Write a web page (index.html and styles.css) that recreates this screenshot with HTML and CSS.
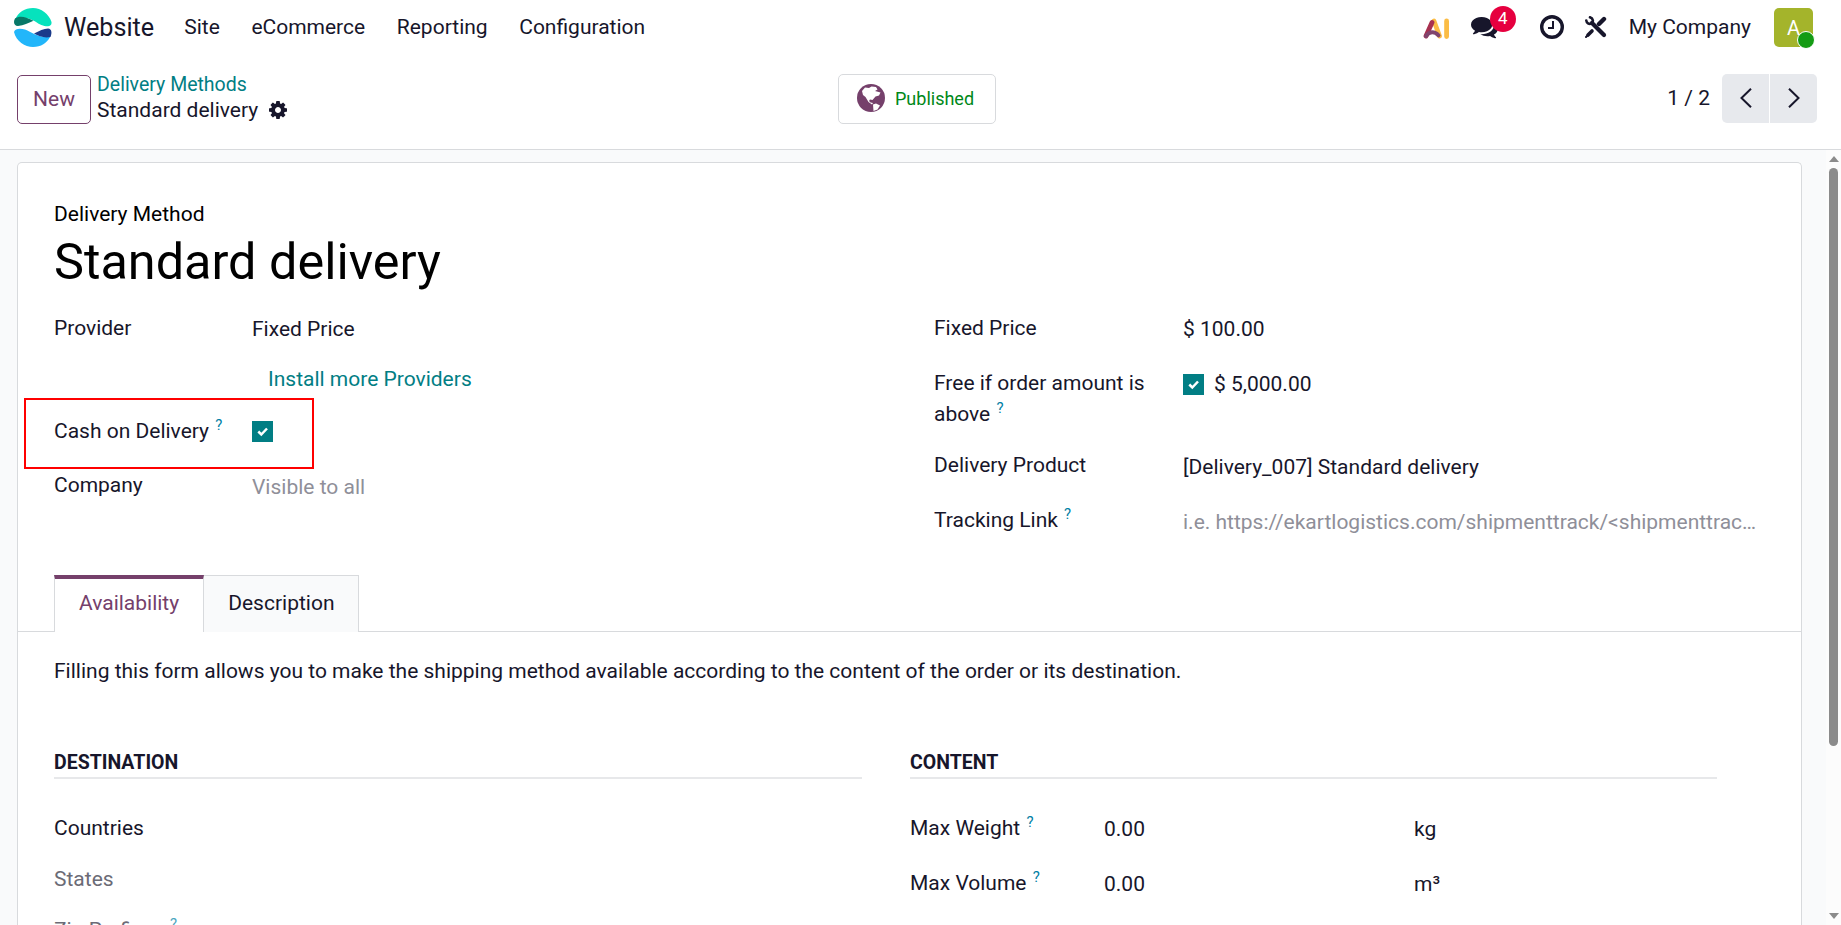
FILE: index.html
```
<!DOCTYPE html>
<html lang="en">
<head>
  <meta charset="UTF-8">
  <title>Standard delivery</title>
  <link rel="stylesheet" href="styles.css">
</head>
<body>
  <header class="navbar">
    <svg class="logo" viewBox="0 0 38 39">
      <path d="M1 12C4 4 11 0 19 0s16 6 18.500 14c.5 4-3 5-7 4-4.500-1-7.500-3.500-11-5.500C14 10 8 8 1 12z" fill="#06e2bd"/>
      <path d="M1 10.500c5-3.500 12-1 18.500 2.200C14 15 10 17.500 4 18c-4 0-5-4-3-7.500z" fill="#087868"/>
      <path d="M0 24c1-4 7-3.500 11-2.500 7 2.500 13 8.500 25 7.500-3 6-9 10-17 10S2 33 0 24z" fill="#22b6fa"/>
      <path d="M20 25.500c5-2.500 10-5 14-5 4 .5 4 4.500 2.500 8.500C30 30.500 25 28 20 25.500z" fill="#1a3a8a"/>
    </svg>
    <span class="app-name">Website</span>
    <nav class="menu">
      <a>Site</a>
      <a>eCommerce</a>
      <a>Reporting</a>
      <a>Configuration</a>
    </nav>
    <div class="systray">
      <svg class="ai" viewBox="0 0 26 21" fill="none" stroke-width="4.800" stroke-linecap="round">
        <path d="M11 3l5.500 15M23.600 3v15.500" stroke="#fbbc45"/>
        <path d="M9 4.500L3 18" stroke="#a8304f"/>
        <path d="M3 18.200c3.500-5 8.500-5 12.500-.8" stroke="#80446d" stroke-width="4"/>
      </svg>
      <div class="messages">
        <svg viewBox="0 128 1792 1536"><path fill="#17162b" d="M1408 768q0 139-94 257t-256.500 186.500-353.500 68.500q-86 0-176-16-124 88-278 128-36 9-86 16h-3q-11 0-20.500-8t-11.500-21q-1-3-1-6.500t.5-6.500 2-6l2.500-5 3.500-5.500 4-5 4.500-5 4-4.500q5-6 23-25t26-29.500 22.500-29 25-38.500 20.500-44q-124-72-195-177t-71-224q0-139 94-257t256.500-186.500 353.500-68.500 353.500 68.500 256.500 186.500 94 257zm384 256q0 120-71 224.500t-195 176.500q10 24 20.500 44t25 38.500 22.500 29 26 29.500 23 25q1 1 4 4.500t4.500 5 4 5 3.500 5.500l2.500 5 2 6 .5 6.500-1 6.500q-3 14-13 22t-22 7q-50-7-86-16-154-40-278-128-90 16-176 16-271 0-472-132 58 4 88 4 161 0 309-45t264-129q125-92 192-212t67-254q0-77-23-152 129 71 204 178t75 230z"/></svg>
        <span class="badge">4</span>
      </div>
      <svg class="clock" viewBox="0 0 24 24" fill="none" stroke="#17162b">
        <circle cx="12" cy="12" r="10.300" stroke-width="3.400"/>
        <path d="M13 6v7H8" stroke-width="2"/>
      </svg>
      <svg class="tools" viewBox="0 0 22 22" fill="none" stroke="#17162b" stroke-linecap="round">
        <path d="M7 7l12 12" stroke-width="4.200"/>
        <path d="M1.300 4.500C1.500 7 4 8.500 6.500 7.500 8.500 6 8.500 2.500 5 1.300" stroke-width="2.600"/>
        <path d="M19 3l-5 5" stroke-width="4.400"/>
        <path d="M7 15l-4 4" stroke-width="3.600"/>
        <path d="M3 19l-2 2" stroke-width="2"/>
      </svg>
      <span class="company">My Company</span>
      <div class="avatar">A<span class="status"></span></div>
    </div>
  </header>

  <div class="control-panel">
    <button class="btn-new">New</button>
    <div class="breadcrumb">
      <a class="link">Delivery Methods</a>
      <div class="current">Standard delivery
        <svg class="gear" viewBox="128 128 1536 1536"><path fill="#17162b" d="M1152 896q0-106-75-181t-181-75-181 75-75 181 75 181 181 75 181-75 75-181zm512-109v222q0 12-8 23t-20 13l-185 28q-19 54-39 91 35 50 107 138 10 12 10 25t-9 23q-27 37-99 108t-94 71q-12 0-26-9l-138-108q-44 23-91 38-16 136-29 186-7 28-36 28h-222q-14 0-24.500-8.500t-11.500-21.500l-28-184q-49-16-90-37l-141 107q-10 9-25 9-14 0-25-11-126-114-165-168-7-10-7-23 0-12 8-23 15-21 51-66.500t54-70.500q-27-50-41-99l-183-27q-13-2-21-12.500t-8-23.500v-222q0-12 8-23t19-13l186-28q14-46 39-92-40-57-107-138-10-12-10-24 0-10 9-23 26-36 98.500-107.500t94.500-71.500q13 0 26 10l138 107q44-23 91-38 16-136 29-186 7-28 36-28h222q14 0 24.500 8.500t11.500 21.500l28 184q49 16 90 37l142-107q9-9 24-9 13 0 25 10 129 119 165 170 7 8 7 22 0 12-8 23-15 21-51 66.500t-54 70.500q26 50 41 98l183 28q13 2 21 12.500t8 23.500z"/></svg>
      </div>
    </div>
    <button class="btn-published">
      <svg class="globe" viewBox="0 0 28 28">
        <circle cx="14" cy="14" r="14" fill="#75406b"/>
        <path d="M5 7l3-3.500 4 .5 2.500-1.500L19 3l1.500 2.500L18 7l5.500 1.500-1.500 3-3.500 1-3 3.500-2.500-.5-1 1.500 1.500 1.500 2.500.5-1 1.500-3.500-2.500-3-5L6 11zM16 20.500l3-1 4 2-2.500 4-4 1.500z" fill="#fff"/>
      </svg>
      Published
    </button>
    <div class="pager">
      <span class="count">1 / 2</span>
      <button><svg viewBox="0 0 12 20"><path d="M11 .8L1.500 10l9.500 9.200"/></svg></button>
      <button><svg viewBox="0 0 12 20"><path d="M1 .8l9.500 9.200L1 19.200"/></svg></button>
    </div>
  </div>

  <main class="content">
    <div class="sheet">
      <div class="title-label">Delivery Method</div>
      <h1>Standard delivery</h1>

      <div class="groups">
        <div class="group group-left">
          <div class="label">Provider</div>
          <div class="value">Fixed Price</div>
          <div class="label"></div>
          <div class="value install"><a class="link">Install more Providers</a></div>
          <div class="label">Cash on Delivery <sup>?</sup></div>
          <div class="value cod"><span class="check"><svg viewBox="0 0 21 21"><path d="M6.300 10.500l3 3 5.700-6"/></svg></span></div>
          <div class="label">Company</div>
          <div class="value muted">Visible to all</div>
        </div>
        <div class="group group-right">
          <div class="label">Fixed Price</div>
          <div class="value">$ 100.00</div>
          <div class="label">Free if order amount is above <sup>?</sup></div>
          <div class="value"><span class="check"><svg viewBox="0 0 21 21"><path d="M6.300 10.500l3 3 5.700-6"/></svg></span>$ 5,000.00</div>
          <div class="label">Delivery Product</div>
          <div class="value product">[Delivery_007] Standard delivery</div>
          <div class="label">Tracking Link <sup>?</sup></div>
          <div class="value muted">i.e. https://ekartlogistics.com/shipmenttrack/&lt;shipmenttrac…</div>
        </div>
      </div>

      <div class="tabs">
        <div class="tab active">Availability</div>
        <div class="tab">Description</div>
      </div>

      <p class="help">Filling this form allows you to make the shipping method available according to the content of the order or its destination.</p>

      <div class="sections">
        <section>
          <h2>Destination</h2>
          <div class="row">Countries</div>
          <div class="row dim">States</div>
          <div class="row dim">Zip Prefixes <sup>?</sup></div>
        </section>
        <section>
          <h2>Content</h2>
          <div class="measure">
            <div class="label">Max Weight <sup>?</sup></div>
            <div class="value">0.00</div>
            <div class="value">kg</div>
          </div>
          <div class="measure">
            <div class="label">Max Volume <sup>?</sup></div>
            <div class="value">0.00</div>
            <div class="value">m³</div>
          </div>
        </section>
      </div>
      <div class="highlight"></div>
    </div>
    <div class="scrollbar">
      <svg class="arrow" viewBox="0 0 10 6"><path d="M5 0l5 6H0z"/></svg>
      <div class="thumb"></div>
      <svg class="arrow" viewBox="0 0 10 6"><path d="M0 0h10L5 6z"/></svg>
    </div>
  </main>
</body>
</html>
```
FILE: styles.css
```
* {
  box-sizing: border-box;
}
body {
  margin: 0;
  height: 925px;
  overflow: hidden;
  display: flex;
  flex-direction: column;
  font-family: Roboto, sans-serif;
  font-size: 21px;
  line-height: 30px;
  color: #17162b;
  background-color: white;
}
button {
  font: inherit;
  padding: 0;
}
svg {
  display: block;
  flex: none;
}
.link {
  color: #017e84;
}

/* top bar */
.navbar {
  height: 54px;
  flex: none;
  display: flex;
  align-items: center;
  padding: 0 28px 0 14px;
}
.logo {
  width: 38px;
  height: 39px;
}
.app-name {
  font-size: 25.2px;
  margin: 1px 0 0 12px;
}
.menu {
  display: flex;
  gap: 31.6px;
  margin-left: 30px;
}
.systray {
  display: flex;
  align-items: center;
  margin-left: auto;
}
.ai {
  width: 26px;
  height: 21px;
  margin-top: 2px;
}
.messages {
  position: relative;
  width: 27px;
  margin-left: 22px;
}
.badge {
  position: absolute;
  left: 19px;
  top: -9px;
  width: 26px;
  height: 26px;
  border-radius: 13px;
  background-color: #e6003f;
  color: white;
  font-size: 17px;
  line-height: 25px;
  text-align: center;
}
.clock {
  width: 24px;
  height: 24px;
  margin-left: 42px;
}
.tools {
  width: 22px;
  height: 22px;
  margin-left: 21px;
}
.company {
  margin-left: 22px;
}
.avatar {
  position: relative;
  width: 39px;
  height: 39px;
  margin-left: 23px;
  border-radius: 5px;
  background-color: #a4b42b;
  color: white;
  font-size: 20px;
  line-height: 41px;
  text-align: center;
}
.status {
  position: absolute;
  left: 23px;
  top: 23px;
  width: 18px;
  height: 18px;
  border: 1px solid white;
  border-radius: 9px;
  background-color: #149b14;
}

/* control panel */
.control-panel {
  height: 96px;
  flex: none;
  display: flex;
  align-items: flex-start;
  padding: 20px 24px 0 17px;
  border-bottom: 1px solid #d8dadd;
}
.btn-new {
  width: 74px;
  height: 49px;
  margin-top: 1px;
  padding-bottom: 2px;
  border: 1px solid #75406b;
  border-radius: 5px;
  background-color: white;
  color: #75406b;
}
.breadcrumb {
  width: 300px;
  margin: -2px 0 0 6px;
  line-height: 26px;
}
.breadcrumb .link {
  display: block;
  height: 25px;
  font-size: 19.5px;
}
.current {
  display: flex;
  align-items: center;
  gap: 11px;
}
.gear {
  width: 18px;
  height: 18px;
}
.btn-published {
  display: flex;
  align-items: center;
  width: 158px;
  height: 50px;
  margin-left: 441px;
  padding-left: 18px;
  gap: 10px;
  border: 1px solid #d8dadd;
  border-radius: 5px;
  background-color: white;
  color: #008818;
  font-size: 18px;
}
.globe {
  width: 28px;
  height: 28px;
  margin-bottom: 2px;
}
.pager {
  display: flex;
  align-items: center;
  gap: 1px;
  margin-left: auto;
}
.count {
  margin: 0 11px 2px 0;
}
.pager button {
  width: 47px;
  height: 49px;
  border: 0;
  border-radius: 5px 0 0 5px;
  background-color: #e7e9ed;
}
.pager button:last-child {
  border-radius: 0 5px 5px 0;
}
.pager svg {
  width: 12px;
  height: 20px;
  margin: -2px auto 0;
  fill: none;
  stroke: #17162b;
  stroke-width: 2;
}

/* form */
.content {
  flex: 1;
  min-height: 0;
  display: flex;
  justify-content: space-between;
  padding: 12px 0 0 17px;
  background-color: #f9fafb;
}
.sheet {
  position: relative;
  width: 1785px;
  overflow: hidden;
  padding: 36px 36px 0;
  border: 1px solid #d8dadd;
  border-bottom: 0;
  border-radius: 5px 5px 0 0;
  background-color: white;
}
.title-label {
  height: 31px;
  color: #000;
}
h1 {
  margin: 0 0 20px;
  font-size: 50.4px;
  font-weight: 400;
  line-height: 63px;
  color: #000;
}
sup {
  position: relative;
  top: -8px;
  margin-left: 1px;
  font-size: 15px;
  line-height: 0;
  vertical-align: baseline;
  color: #0180a5;
}
.groups {
  display: grid;
  grid-template-columns: 880px 1fr;
  height: 262px;
}
.group {
  display: grid;
  align-content: start;
}
.group-left {
  grid-template-columns: 198px 1fr;
  grid-template-rows: 50px 53px 54px 40px;
}
.group-right {
  grid-template-columns: 249px 1fr;
  grid-template-rows: 55px 82px 55px 40px;
}
.group-right .label {
  line-height: 31px;
  padding-right: 20px;
}
.value {
  display: flex;
  align-items: center;
  height: 30px;
  margin-top: 1px;
  white-space: nowrap;
}
.value.cod {
  margin-top: 0;
}
.value.product {
  margin-top: 2px;
}
.install {
  padding-left: 16px;
}
.muted {
  color: #8f8f99;
  margin-top: 2px;
}
.check {
  width: 21px;
  height: 21px;
  margin-right: 10px;
  background-color: #017e84;
}
.check path {
  fill: none;
  stroke: white;
  stroke-width: 2.5;
}
.highlight {
  position: absolute;
  left: 6px;
  top: 235px;
  width: 290px;
  height: 71px;
  border: 2px solid #f00;
}

/* notebook */
.tabs {
  display: flex;
  height: 57px;
  margin: 0 -36px;
  padding-left: 36px;
  border-bottom: 1px solid #d8dadd;
}
.tab {
  height: 57px;
  padding: 12px 23px 0 24px;
  border: 1px solid #d8dadd;
  border-left: 0;
  border-bottom: 0;
  background-color: #f9fafb;
}
.tab.active {
  padding: 9px 24px 0;
  border-left: 1px solid #d8dadd;
  border-top: 4px solid #75406b;
  background-color: white;
  color: #75406b;
}
.help {
  margin: 24px 0 62px;
}
.sections {
  display: grid;
  grid-template-columns: 808px 807px;
  gap: 48px;
}
h2 {
  height: 31px;
  margin: 0 0 34px;
  font-size: 19.5px;
  line-height: 30px;
  text-transform: uppercase;
  border-bottom: 2px solid #e7e8ea;
}
.row {
  height: 51px;
}
.dim {
  color: #6b6b76;
}
.dim sup {
  color: #4da6c0;
}
.measure {
  display: grid;
  grid-template-columns: 194px 310px 1fr;
  height: 55px;
}

.scrollbar {
  width: 15px;
  margin-top: -12px;
  padding: 6px 2px 6px 3px;
  display: flex;
  flex-direction: column;
  background-color: #fcfcfc;
}
.arrow {
  width: 10px;
  height: 6px;
  fill: #8b8b8b;
}
.thumb {
  width: 9px;
  height: 578px;
  margin: 6px 0 auto;
  border-radius: 5px;
  background-color: #8b8b8b;
}
```
